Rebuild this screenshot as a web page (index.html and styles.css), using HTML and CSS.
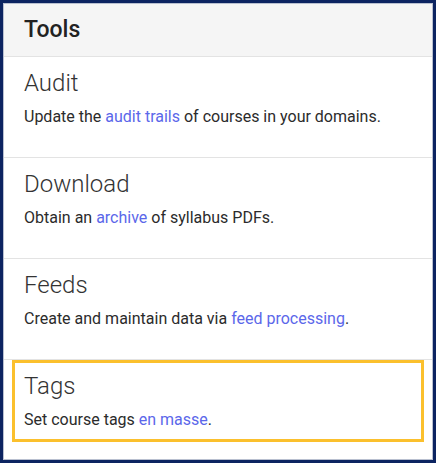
FILE: index.html
```html
<!DOCTYPE html>
<html lang="en">
<head>
<meta charset="utf-8">
<title>Tools</title>
<link rel="stylesheet" href="styles.css">
</head>
<body>
<div class="frame">
  <div class="card">
    <div class="card-header">Tools</div>
    <ul class="tool-list">
      <li class="tool">
        <div class="tool-box">
          <h2 class="tool-title">Audit</h2>
          <p class="tool-desc">Update the <a href="#">audit trails</a> of courses in your domains.</p>
        </div>
      </li>
      <li class="tool">
        <div class="tool-box">
          <h2 class="tool-title">Download</h2>
          <p class="tool-desc">Obtain an <a href="#">archive</a> of syllabus PDFs.</p>
        </div>
      </li>
      <li class="tool">
        <div class="tool-box">
          <h2 class="tool-title">Feeds</h2>
          <p class="tool-desc">Create and maintain data via <a href="#">feed processing</a>.</p>
        </div>
      </li>
      <li class="tool">
        <div class="tool-box tool-box-active">
          <h2 class="tool-title">Tags</h2>
          <p class="tool-desc">Set course tags <a href="#">en masse</a>.</p>
        </div>
      </li>
    </ul>
  </div>
</div>
</body>
</html>
```
FILE: styles.css
```css
* { box-sizing: border-box; }
html, body {
  margin: 0;
  padding: 0;
  background: #ffffff;
}
body {
  font-family: Roboto, "Liberation Sans", Arial, sans-serif;
  color: #333333;
}
.frame {
  width: 436px;
  height: 463px;
  border: 3px solid #0c2461;
  overflow: hidden;
}
.card {
  height: 100%;
  border: 1px solid #b9c0d0;
  background: #ffffff;
  overflow: hidden;
}
.card-header {
  height: 53px;
  display: flex;
  align-items: center;
  padding: 0 20px;
  background: #f5f5f5;
  border-bottom: 1px solid #e3e3e3;
  font-size: 23px;
  line-height: 26px;
  font-weight: 500;
  color: #222222;
}
.tool-list {
  list-style: none;
  margin: 0;
  padding: 0;
}
.tool {
  height: 101px;
  padding: 0 8px 18px;
  border-bottom: 1px solid #e3e3e3;
}
.tool-box {
  height: 82px;
  border: 3px solid transparent;
  padding: 9px 9px 10px;
}
.tool-box-active {
  border-color: #fbc02d;
}
.tool-title {
  margin: 0;
  font-size: 24px;
  line-height: 28px;
  font-weight: 300;
  color: #333333;
}
.tool-desc {
  margin: 10px 0 0;
  font-size: 16px;
  line-height: 19px;
  color: #2b2b2b;
}
.tool-desc a {
  color: #5b67ea;
  text-decoration: none;
}
```
